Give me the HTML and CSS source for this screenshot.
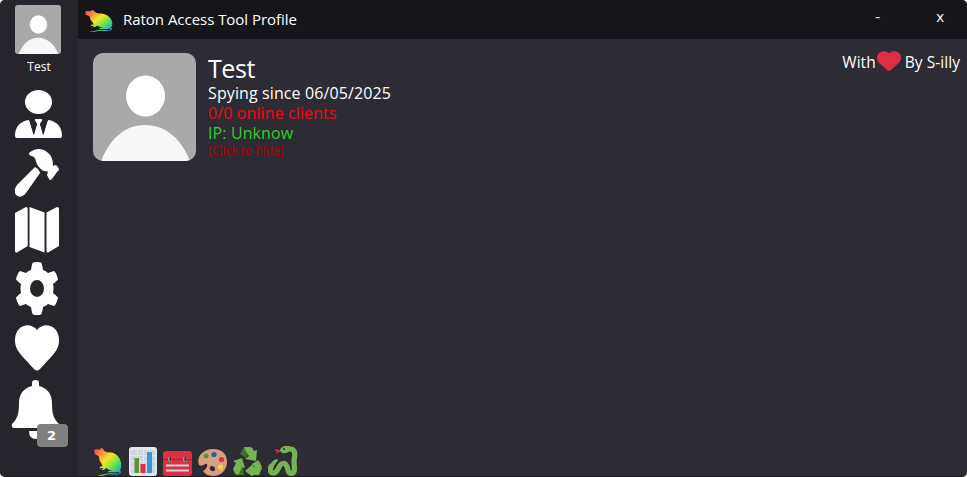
FILE: index.html
```
<!DOCTYPE html>
<html lang="en">
<head>
<meta charset="utf-8">
<title>Raton Access Tool Profile</title>
<link rel="stylesheet" href="styles.css">
</head>
<body>
<svg class="defs" width="0" height="0" aria-hidden="true">
  <defs>
    <linearGradient id="rainbow" x1="0" y1="0" x2="1" y2="1">
      <stop offset=".08" stop-color="#ff5148"/><stop offset=".28" stop-color="#ffa638"/>
      <stop offset=".44" stop-color="#f4e62c"/><stop offset=".62" stop-color="#8ce53c"/>
      <stop offset=".77" stop-color="#35d486"/><stop offset=".95" stop-color="#3786e8"/>
    </linearGradient>
    <symbol id="rat" viewBox="0 0 84 84" preserveAspectRatio="none">
      <path fill="url(#rainbow)" d="M0 10Q0 2 10 4L16 5Q18-1 23 1Q29 1 29 7Q34 14 44 13C61 13 74 23 79 37C84 51 82 61 78 67C83 73 81 79 70 80C58 81 46 76 31 82Q21 85 12 82Q25 81 34 78C49 73 62 78 72 77Q79 75 75 71C69 74 55 73 41 72L45 69L55 68Q43 66 37 60L30 65L22 66L28 60L20 60L16 64L19 56L26 54L22 46Q14 37 15 26Q12 21 6 20Q0 18 2 13Z"/>
    </symbol>
    <symbol id="heart" viewBox="0 0 44 46" preserveAspectRatio="none">
      <path d="M22 5C17-1 9-1 4 4C-1 9-1 18 2 24C4 28 9 33 19 44Q22 47 25 44C35 33 40 28 42 24C45 18 45 9 40 4C35-1 27-1 22 5Z"/>
    </symbol>
  </defs>
</svg>
<div class="window">
  <nav class="sidebar">
    <svg class="mini-avatar" viewBox="0 0 103 108" preserveAspectRatio="none">
      <rect width="103" height="108" fill="#a9a9a9"/><ellipse cx="52.500" cy="43" rx="19.500" ry="20.500" fill="#fff"/><path d="M8 108C18 83 34 72 52 72S87 83 97 108Z" fill="#f7f7f7"/>
    </svg>
    <div class="user-name">Test</div>
    <svg class="icon person" viewBox="0 0 47 48">
      <ellipse cx="23.500" cy="12" rx="13.500" ry="12"/>
      <path d="M14 30L19 45L22 34L20 31V29H27V31L25 34L28 45L33 30C42 31 47 37 47 46Q47 48 45 48H2Q0 48 0 46C0 37 5 31 14 30Z"/>
      <path class="cut" d="M14.500 30L19 29L22 34L18.500 45ZM32.500 30L28 29L25 34L28.500 45Z"/>
    </svg>
    <svg class="icon hammer" viewBox="0 0 44 48">
      <path d="M14 4C20-1 27-1 32 3C37 7 38 11 38 17L40 16Q42 16 44 20Q44 22 42 23L37 30Q35 32 34 30L32 26L33 22.500C28 23 24 19 22 15C20.500 12 21 9 18 7.500L15 6.500Q13.500 5 14 4Z"/>
      <path d="M20 18Q24 20 25 24L11 44C7 49 2 49 0 44Q-1 40 2 36Z"/>
    </svg>
    <svg class="icon map" viewBox="0 0 44 46">
      <path d="M0 6L11 0Q12.700 0 12.700 2V39L2 45.500Q0 46 0 44ZM14.500 0L29.500 5.500V45.500L14.500 40ZM31.500 5.500L42 0Q44 0 44 2V39L33 45.500Q31.500 45.500 31.500 44Z"/>
    </svg>
    <svg class="icon gear" viewBox="0 0 42 53">
      <path fill-rule="evenodd" d="M17 0.500Q21-.5 25 .5Q26 1 27 8Q30 9 32 11L38 9Q40 10 42 17Q42 18 37 22Q38 26 37 31Q42 35 42 36Q40 43 38 44L32 42Q30 44 27 45Q26 52 25 52.500Q21 53.500 17 52.500Q16 52 15 45Q12 44 10 42L4 44Q2 43 0 36Q0 35 5 31Q4 26 5 22Q0 18 0 17Q2 10 4 9L10 11Q12 9 15 8Q16 1 17 .5ZM21 18A7 8.500 0 1 0 21 35A7 8.500 0 1 0 21 18Z"/>
    </svg>
    <svg class="icon love"><use href="#heart"/></svg>
    <div class="bell">
      <svg class="icon" viewBox="0 0 47 58">
        <path d="M20 6V3Q20 0 23.500 0T27 3V6C36 8 40 15 40 23C40 35 42 39 47 44Q48 48 45 48H2Q-1 48 0 44C5 39 7 35 7 23C7 15 11 8 20 6ZM17 51H31Q31 59 24 59T17 51Z"/>
      </svg>
      <span class="badge">2</span>
    </div>
  </nav>
  <div class="main">
    <header class="titlebar">
      <svg class="title-rat"><use href="#rat"/></svg>
      <h1>Raton Access Tool Profile</h1>
      <span class="minimize">-</span>
      <span class="close">x</span>
    </header>
    <main class="content">
      <section class="profile">
        <svg class="avatar" viewBox="0 0 103 108">
          <rect width="103" height="108" fill="#a9a9a9"/><ellipse cx="52.500" cy="43" rx="19.500" ry="20.500" fill="#fff"/><path d="M8 108C18 83 34 72 52 72S87 83 97 108Z" fill="#f7f7f7"/>
        </svg>
        <div class="info">
          <h2>Test</h2>
          <div class="since">Spying since 06/05/2025</div>
          <div class="clients">0/0 online clients</div>
          <div class="ip">IP: Unknow</div>
          <div class="hide">[Click to hide]</div>
        </div>
        <div class="credit"><span>With</span><svg><use href="#heart"/></svg><span>By S-illy</span></div>
      </section>
      <div class="badges">
        <svg class="rat"><use href="#rat"/></svg>
        <svg class="chart" viewBox="0 0 28 29">
          <rect width="28" height="29" rx="3" fill="#e1e8ed"/><path d="M2 3H26V26H2Z" fill="#ccd6dd"/><path d="M2 8.500H26M2 14.500H26M2 20.500H26M8.500 3V26M14.500 3V26M20.500 3V26" stroke="#e1e8ed"/>
          <rect x="5.500" y="11" width="4.500" height="15" rx=".5" fill="#5c913b"/><rect x="11.500" y="17" width="5" height="9" rx=".5" fill="#dd2e44"/><rect x="18" y="5" width="5" height="21" rx=".5" fill="#3b94d9"/>
        </svg>
        <svg class="toolbox" viewBox="0 0 29 29">
          <path d="M6 4V2Q6 0 8 0H22Q24 0 24 2V4" fill="none" stroke="#292f33" stroke-width="2"/><rect y="4" width="29" height="25" rx="3" fill="#dd2e44"/><path d="M0 12.500H29" stroke="#b81832"/><path d="M5 10H9V14L7.500 15L5 14ZM20 10H24V14L22.500 15L20 14Z" fill="#8899a6"/><path d="M7.500 10V14M22.500 10V14" stroke="#292f33" stroke-width="1.800"/><path d="M3 18.500H26M3 23.500H26" stroke="#ccd6dd" stroke-width="1.800"/>
        </svg>
        <svg class="palette" viewBox="0 0 29 27">
          <path fill="#d99e82" fill-rule="evenodd" d="M15 0C5 0-2 8 1 16Q4 18 7 15Q10 14 9 18Q7 21 5 22Q8 27 15 27C23 27 29 21 29 13S24 0 15 0ZM13 17Q17 17 17 20Q17 23 14 22Q10 20 13 17Z"/>
          <circle cx="8" cy="7" r="2.500" fill="#5c913b"/><circle cx="16" cy="5.500" r="2.600" fill="#226699"/><circle cx="23.500" cy="10.500" r="2.600" fill="#dd2e44"/><circle cx="22.500" cy="18" r="2.600" fill="#ffcc4d"/>
        </svg>
        <svg class="recycle" viewBox="0 0 29 29">
          <g fill="#3e721d"><path d="M7 7L11 0L16 6L13 11Z"/><path d="M19 17L27 14L29 21L26 28L21 22Z"/><path d="M3 19L10 19L11 28H5L1 23Z"/></g>
          <g fill="#77b255"><path d="M11 0H17Q19 0 21 4L24 3L23 14L12 12L16 9L12 3Z"/><path d="M19 17L25 13L29 20L24 22Z"/><path d="M26 28H20V30L12 24L20 17V20L29 21Z"/><path d="M0 14L9 11L12 21L9 20L6 27L4 28Q1 26 0 22L3 16Z"/></g>
        </svg>
        <svg class="snake" viewBox="0 0 30 30">
          <path d="M14 4.500C18 5 19 3 22 3C28 3 27 9 26 15L26.500 24C26 29 20 28 20 24C19 19 17 17 15 17.500C10 18 11 26 6 27C1 27 2 22 4 19" fill="none" stroke="#77b255" stroke-width="5.200"/>
          <path d="M1.500 20Q4 14 9 13Q11 14 8 17L6 20ZM12 5Q12 1 17 0H22L20 6Q15 8 12 5Z" fill="#77b255"/>
          <path d="M12 5L7 4M12 5L8 7" stroke="#dd2e44" stroke-width="1.300"/><circle cx="16" cy="3" r="1" fill="#292f33"/>
        </svg>
      </div>
    </main>
  </div>
</div>
</body>
</html>
```
FILE: styles.css
```
* { box-sizing: border-box; }
body { margin: 0; background: #fff; font-family: "Open Sans", "Noto Sans", sans-serif; color: #fff; overflow: hidden; }
svg { display: block; flex: none; }
.defs { position: absolute; }
.window { display: flex; width: 967px; height: 477px; border-radius: 5px; overflow: hidden; background: #2d2b33; border-bottom: 1px solid #1d1c22; }
.sidebar { width: 78px; background: #26252b; padding: 5px 0 0 15px; flex: none; }
.mini-avatar { width: 46px; height: 49px; border-radius: 3px; }
.user-name { width: 48px; height: 36px; padding-top: 4px; font-size: 12px; line-height: 18px; text-align: center; }
.icon { fill: #fff; }
.icon .cut { fill: #26252b; }
.person { width: 47px; height: 48px; }
.hammer { width: 44px; height: 48px; margin-top: 11px; }
.map { width: 44px; height: 46px; margin-top: 10px; }
.gear { width: 42px; height: 53px; margin: 9px 0 0 1px; }
.love { width: 44px; height: 46px; margin-top: 10px; }
.bell { position: relative; width: 57px; margin: 9px 0 0 -3px; }
.bell svg { width: 47px; height: 58px; overflow: visible; }
.badge { position: absolute; left: 25px; top: 44px; width: 31px; height: 23px; border-radius: 4px; background: #808080; font-family: "DejaVu Sans", sans-serif; font-weight: bold; font-size: 13px; line-height: 24px; text-align: center; padding-right: 2px; }
.main { flex: 1; display: flex; flex-direction: column; }
.titlebar { display: flex; align-items: center; height: 39px; background: #16151a; padding: 0 23px 0 7px; }
.title-rat { width: 28px; height: 22px; margin-top: 2px; }
h1 { font-size: 15px; font-weight: 400; line-height: 22px; letter-spacing: -.03px; margin: -2px auto 0 10px; }
.minimize { font-size: 15px; margin: -7px 56px 0 0; }
.close { font-size: 15px; margin-top: -7px; }
.content { flex: 1; display: flex; flex-direction: column; justify-content: space-between; padding: 14px 7px 0 15px; }
.profile { display: flex; }
.avatar { width: 103px; height: 108px; border-radius: 10px; }
.info { margin-left: 12px; font-size: 16px; line-height: 20px; letter-spacing: .11px; white-space: nowrap; }
h2 { margin: 0; font-size: 25px; font-weight: 400; line-height: 30px; letter-spacing: -.4px; }
.clients { color: #f00a14; }
.ip { color: #32cd32; }
.hide { color: #b80006; font-size: 12px; line-height: 16px; letter-spacing: 0; }
.credit { display: flex; margin-left: auto; font-size: 15.500px; line-height: 18px; letter-spacing: .05px; white-space: nowrap; }
.credit svg { width: 24px; height: 20px; margin: -2px 4px 0 1px; fill: #dd2e44; }
.badges { display: flex; align-items: flex-end; height: 30px; }
.rat { width: 28px; height: 28px; margin: 0 7px 0 1px; }
.chart { width: 28px; height: 29px; margin-right: 6px; }
.toolbox { width: 29px; height: 29px; margin-right: 6px; overflow: visible; }
.palette { width: 29px; height: 27px; margin-right: 6px; }
.recycle { width: 29px; height: 29px; margin-right: 6px; }
.snake { width: 30px; height: 30px; }
```
